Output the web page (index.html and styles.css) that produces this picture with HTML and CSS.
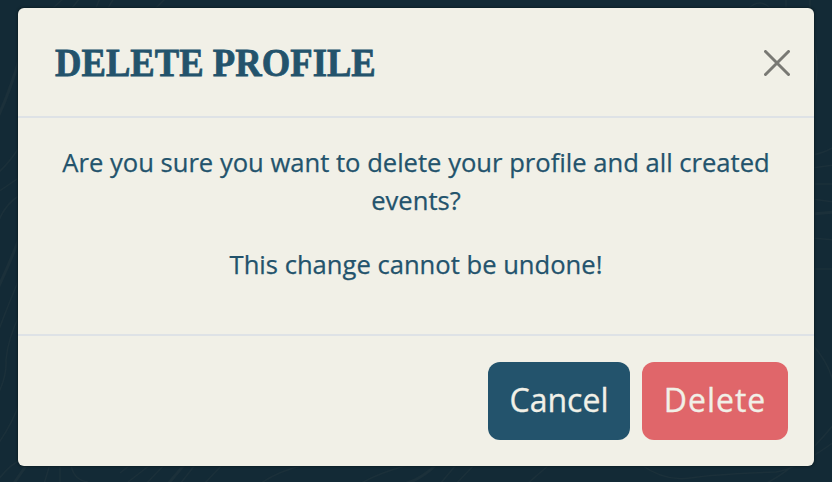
FILE: index.html
```html
<!DOCTYPE html>
<html lang="en">
<head>
<meta charset="utf-8">
<title>Delete profile</title>
<link rel="stylesheet" href="styles.css">
</head>
<body>
<svg class="contours" viewBox="0 0 832 482" aria-hidden="true">
  <path class="wide" d="M-2 117Q10 91 20 57M-2 288Q12 258 20 236M12 486L28 463"/>
  <path d="M-2 173Q10 162 20 146M-2 192L20 177M-2 223Q4 205 20 195M-2 332Q8 305 20 277M-2 394Q7 376 6 360Q8 338 20 314M-2 444Q12 424 20 402M-2 480Q10 464 24 458M44 484L50 464M60 484V464M71 464Q73 480 88 482M120 473L130 465M128 482L150 465M146 484L164 465M180 484L195 465M204 484L222 465M260 484Q276 472 304 465M360 484Q376 474 408 465M440 484L456 465M456 484L474 465M527 484L549 465M640 464Q665 482 690 478T776 472Q795 470 834 442M765 484Q800 466 834 424M812 344Q830 364 834 386"/>
  <path class="wide" d="M168 484L184 465M404 484Q420 480 436 465M812 214L834 212"/>
  <path d="M812 155Q824 153 834 147M812 168L834 165M812 184H834M812 199L834 202M812 238L834 240M812 269H834M812 40Q821 65 814 92M53 8L64 -2M72 8L80 -2M96 8L100 -2M108 8L114 -2M154 10L166 -2M748 9Q760 -3 771 9M786 9V-2M810 9V-2"/>
</svg>
<main class="dialog" role="dialog" aria-labelledby="dialog-title">
  <header class="dialog-header">
    <h1 class="dialog-title" id="dialog-title">DELETE PROFILE</h1>
    <button class="close" aria-label="Close">
      <svg viewBox="0 0 26 26" width="26" height="26"><path d="M1.5 1.5L24.5 24.5M24.5 1.5L1.5 24.5"/></svg>
    </button>
  </header>
  <section class="dialog-body">
    <p>Are you sure you want to delete your profile and all created events?</p>
    <p>This change cannot be undone!</p>
  </section>
  <footer class="dialog-footer">
    <button class="button cancel">Cancel</button>
    <button class="button delete">Delete</button>
  </footer>
</main>
</body>
</html>
```

FILE: styles.css
```css
* {
  box-sizing: border-box;
}

body {
  margin: 0;
  height: 482px;
  padding: 8px 18px 16px;
  overflow: hidden;
  background: #132a36;
  font-family: "Open Sans", "Noto Sans", sans-serif;
}

.contours {
  position: absolute;
  inset: 0;
  width: 832px;
  height: 482px;
  fill: none;
  stroke: #1b303a;
  stroke-width: 1.5;
}

.contours .wide {
  stroke-width: 3;
}

.dialog {
  position: relative;
  display: flex;
  flex-direction: column;
  width: 796px;
  height: 458px;
  border-radius: 6px;
  background: #f1f0e7;
  color: #23536c;
  box-shadow: 0 0 2px 1px #0c1f27;
}

.dialog-header {
  display: flex;
  align-items: center;
  justify-content: space-between;
  height: 110px;
  padding: 0 24px 0 37px;
  border-bottom: 2px solid #dee2e6;
}

.dialog-title {
  margin: 0;
  font: bold 41px/50px "Liberation Serif", serif;
  white-space: nowrap;
  transform: scaleX(0.894);
  transform-origin: left;
  -webkit-text-stroke: 0.8px;
}

.close {
  display: flex;
  margin: 2px 0 0;
  padding: 0;
  border: 0;
  background: none;
}

.close path {
  fill: none;
  stroke: #797974;
  stroke-width: 3;
  stroke-linecap: round;
}

.dialog-body {
  height: 216px;
  padding: 26px 32px 0;
  font-size: 25.6px;
  line-height: 38px;
  text-align: center;
  -webkit-text-stroke: 0.25px;
}

.dialog-body p {
  margin: 0 0 26px;
}

.dialog-footer {
  display: flex;
  justify-content: flex-end;
  align-items: flex-start;
  gap: 12px;
  height: 132px;
  padding: 26px 26px 0;
  border-top: 2px solid #dee2e6;
}

.button {
  height: 78px;
  padding: 0 0 2px;
  border: 0;
  border-radius: 12px;
  color: #f1f0e7;
  font: 32px/76px "Open Sans", "Noto Sans", sans-serif;
  -webkit-text-stroke: 0.3px;
}

.cancel {
  width: 142px;
  background: #23536c;
}

.delete {
  width: 146px;
  background: #e0666a;
  letter-spacing: 1px;
}
```
